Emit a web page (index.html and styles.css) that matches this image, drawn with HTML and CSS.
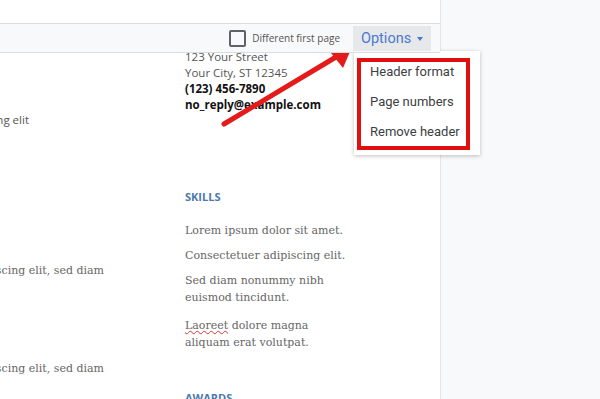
FILE: index.html
```html
<!DOCTYPE html>
<html lang="en">
<head>
    <meta charset="UTF-8">
    <meta name="viewport" content="width=device-width, initial-scale=1.0">
    <title>Resume - Header options</title>
    <link rel="stylesheet" href="styles.css">
</head>
<body>

<div class="page">
    <div class="page-top"></div>

    <div class="header-bar">
        <label class="first-page">
            <span class="checkbox"></span>
            <span>Different first page</span>
        </label>
        <div class="options">Options <span class="caret"></span></div>
    </div>

    <div class="content">
        <div class="left">
            <div class="line sans l1"><span>Lorem ipsum dolor sit amet, consectetuer adipiscing elit</span></div>
            <div class="line serif l2"><span>Lorem ipsum dolor sit amet, consectetuer adipiscing elit, sed diam</span></div>
            <div class="line serif l3"><span>Lorem ipsum dolor sit amet, consectetuer adipiscing elit, sed diam</span></div>
        </div>

        <div class="right">
            <div class="address">
                <div>123 Your Street</div>
                <div>Your City, ST 12345</div>
                <div class="strong">(123) 456-7890</div>
                <div class="strong">no_reply@example.com</div>
            </div>

            <h4 class="section">Skills</h4>
            <p>Lorem ipsum dolor sit amet.</p>
            <p>Consectetuer adipiscing elit.</p>
            <p>Sed diam nonummy nibh<br>euismod tincidunt.</p>
            <p class="last"><span class="typo">Laoreet</span> dolore magna<br>aliquam erat volutpat.</p>

            <h4 class="section awards">Awards</h4>
        </div>
    </div>
</div>

<!-- dropdown opened from the Options button -->
<div class="menu">
    <div class="menu-item">Header format</div>
    <div class="menu-item">Page numbers</div>
    <div class="menu-item">Remove header</div>
    <div class="highlight"></div>
</div>

<!-- annotation arrow -->
<svg class="arrow" width="600" height="399" viewBox="0 0 600 399">
    <line x1="224" y1="124" x2="336" y2="57" stroke="#e31b1b" stroke-width="5" stroke-linecap="round"/>
    <polygon points="355,40 327,48 343,68" fill="#e31b1b"/>
</svg>

</body>
</html>
```

FILE: styles.css
```css
body {
    margin: 0;
    background: #f8f9fa;
    overflow: hidden;
    height: 399px;
}
.page {
    width: 441px;
    height: 399px;
    background: #fff;
    border-right: 1px solid #e3e5e8;
    overflow: hidden;
    box-sizing: border-box;
}
.page-top {
    height: 23px;
}
.header-bar {
    position: relative;
    z-index: 1;
    height: 28px;
    background: #f8f9fa;
    border-top: 1px solid #dadce0;
    border-bottom: 1px solid #dadce0;
    display: flex;
    align-items: center;
    justify-content: flex-end;
    padding-right: 9px;
    gap: 13px;
}
.first-page {
    display: flex;
    align-items: center;
    gap: 6px;
    font-family: "Open Sans", sans-serif;
    font-size: 10px;
    color: #555;
}
.checkbox {
    width: 13px;
    height: 13px;
    border: 2px solid #5f6368;
    border-radius: 2px;
}
.options {
    display: flex;
    align-items: center;
    gap: 6px;
    width: 78px;
    height: 25px;
    margin-top: 1px;
    padding: 0 0 0 8px;
    box-sizing: border-box;
    background: #e7e8ea;
    font-family: Roboto, sans-serif;
    font-size: 14.5px;
    color: #4a78d0;
}
.caret {
    width: 0;
    height: 0;
    border-left: 3.5px solid transparent;
    border-right: 3.5px solid transparent;
    border-top: 4px solid #4a78d0;
    margin-top: 1px;
}
.content {
    display: flex;
    margin-top: -4px;
}
.left {
    width: 110px;
    flex-shrink: 0;
    overflow: hidden;
}
.line {
    display: flex;
    justify-content: flex-end;
    white-space: nowrap;
    height: 17px;
    line-height: 17px;
}
.sans {
    font-family: "Open Sans", sans-serif;
    font-size: 11.5px;
    color: #555;
}
.serif {
    font-family: "DejaVu Serif", serif;
    font-size: 11px;
    color: #666;
}
.l1 {
    margin-top: 62px;
    padding-right: 81px;
}
.l2 {
    margin-top: 134px;
    padding-right: 6px;
}
.l3 {
    margin-top: 81px;
    padding-right: 6px;
}
.right {
    margin-left: 75px;
}
.address {
    font-family: "Open Sans", sans-serif;
    font-size: 11.5px;
    line-height: 16px;
    color: #555;
}
.strong {
    font-weight: bold;
    color: #111;
}
.section {
    margin: 76px 0 17px;
    font-family: "Open Sans", sans-serif;
    font-size: 11px;
    font-weight: bold;
    text-transform: uppercase;
    color: #4a7ab0;
    line-height: 16px;
}
.right p {
    margin: 0 0 8px;
    font-family: "DejaVu Serif", serif;
    font-size: 11px;
    line-height: 17px;
    color: #666;
}
.right p.last {
    margin-top: 11px;
}
.typo {
    text-decoration: underline wavy #d33;
    text-decoration-thickness: 1px;
}
.awards {
    margin-top: 39px;
}
.menu {
    position: absolute;
    left: 354px;
    top: 51px;
    width: 126px;
    height: 104px;
    padding-top: 9px;
    box-sizing: border-box;
    background: #fff;
    box-shadow: 0 1px 4px rgba(0, 0, 0, 0.25);
    font-family: Roboto, sans-serif;
    font-size: 13px;
    color: #3c4043;
}
.menu-item {
    padding-left: 16px;
    height: 30px;
    line-height: 24px;
}
.highlight {
    position: absolute;
    left: 3px;
    top: 7px;
    width: 113px;
    height: 92px;
    border: 4px solid #e01010;
    box-sizing: border-box;
}
.arrow {
    position: absolute;
    left: 0;
    top: 0;
}
```
